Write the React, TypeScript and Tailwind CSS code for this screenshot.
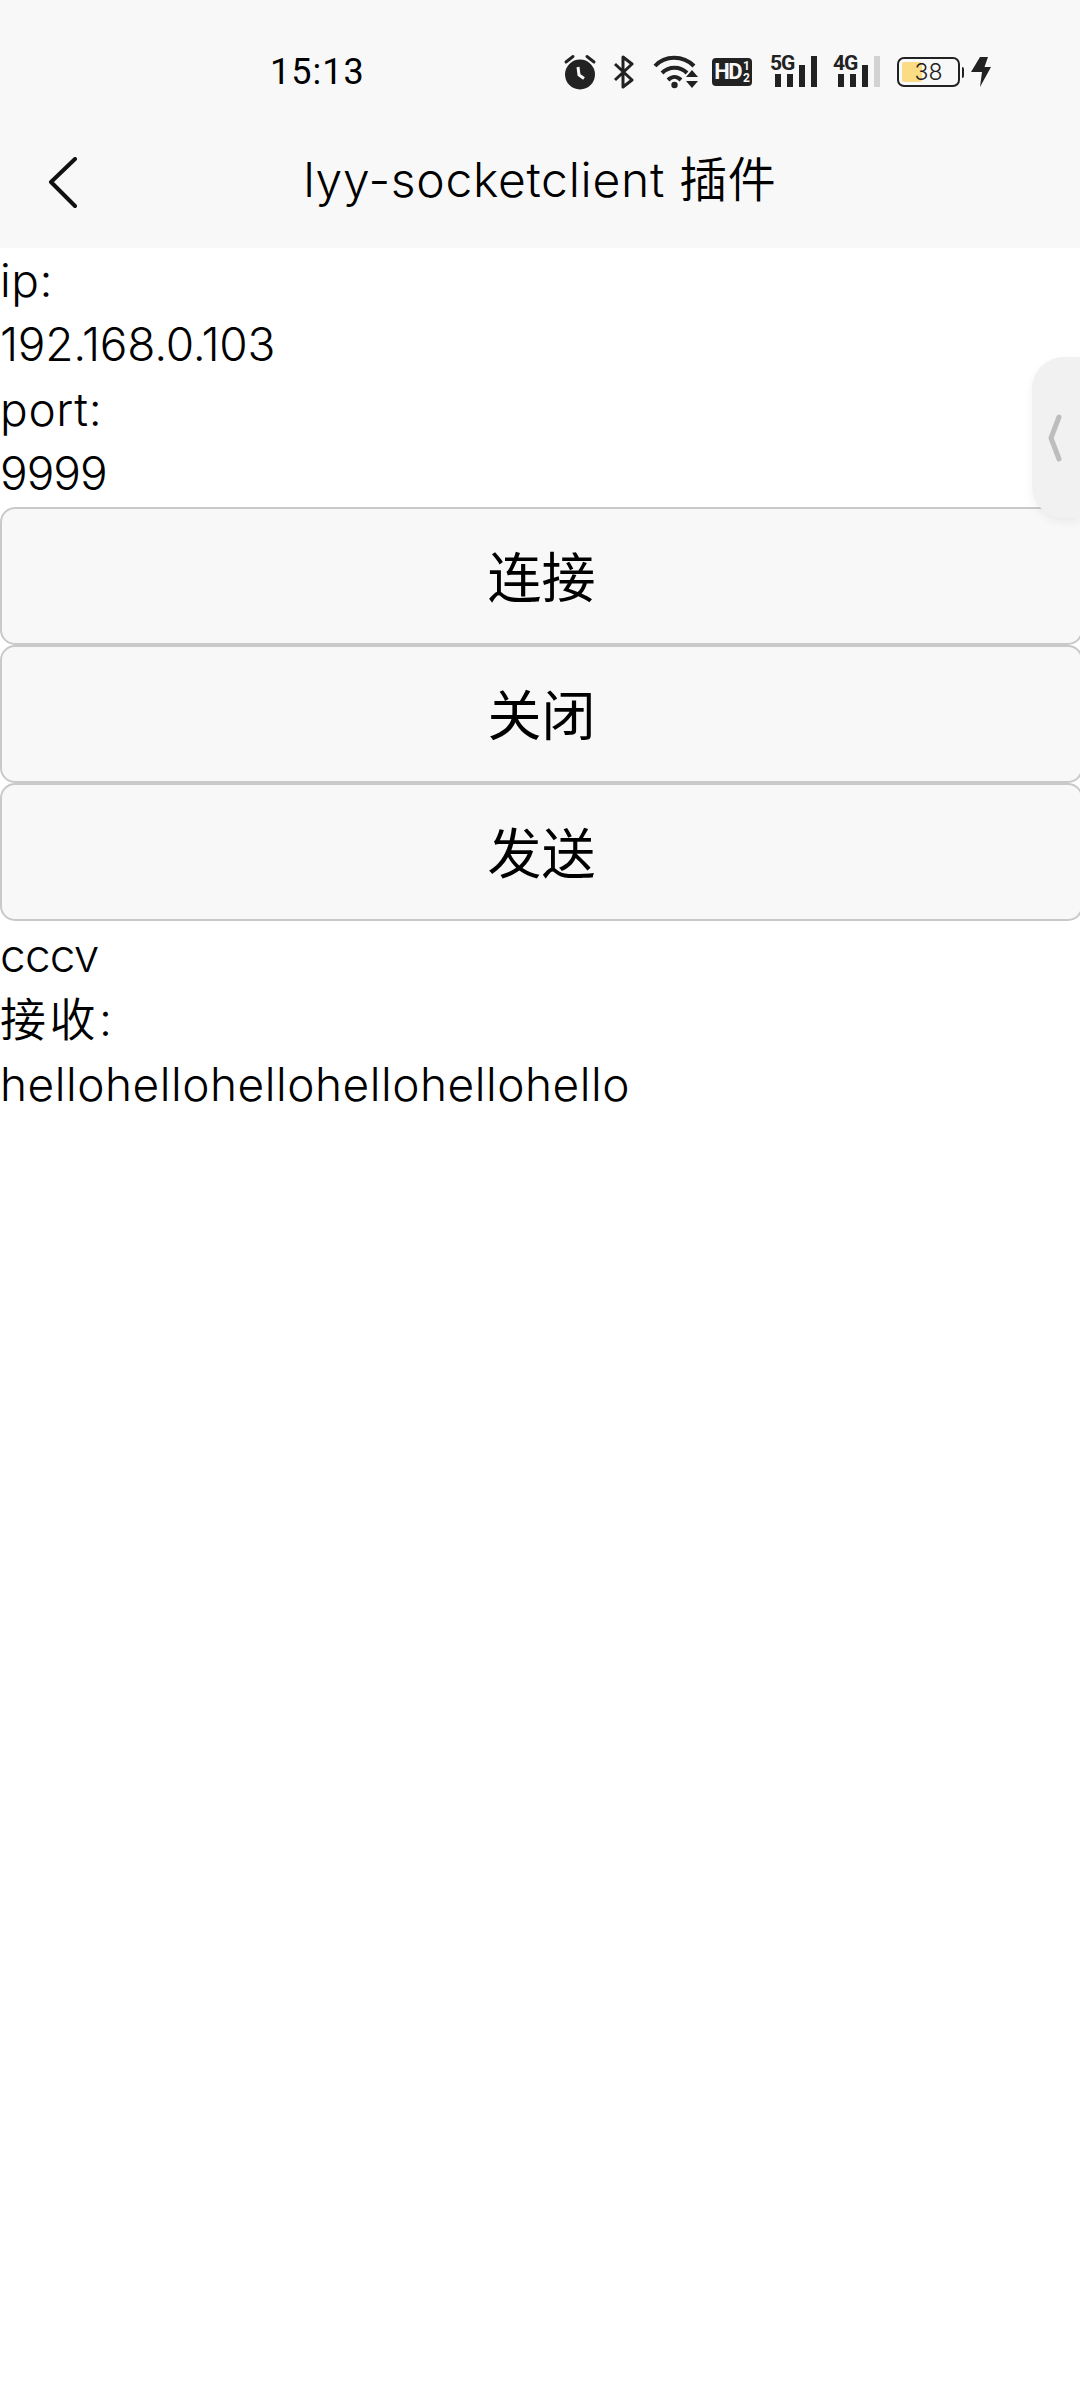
import React from "react";

const textFont = "font-['Inter','Noto_Sans_CJK_SC',sans-serif]";

function AlarmIcon() {
  return (
    <svg width="34" height="36" viewBox="0 0 34 36" className="shrink-0">
      <circle cx="17" cy="20.5" r="15" fill="#222" />
      <path d="M3 8 L10 2.5 M31 8 L24 2.5" stroke="#222" strokeWidth="3" strokeLinecap="round" />
      <path d="M15 13 L16 21 L21 24.5" stroke="#f8f8f8" strokeWidth="3" fill="none" />
    </svg>
  );
}

function BluetoothIcon() {
  return (
    <svg width="22" height="34" viewBox="0 0 22 34" className="shrink-0">
      <path d="M2 9 L19 25 L10 32 L10 2 L19 9 L2 25" stroke="#222" strokeWidth="3" fill="none" strokeLinejoin="round" />
    </svg>
  );
}

function WifiIcon() {
  return (
    <svg width="46" height="34" viewBox="0 0 46 34" className="shrink-0">
      <path d="M2 11 C12 0 30 0 41 11" stroke="#222" strokeWidth="4" fill="none" />
      <path d="M9 18 C16 11 27 11 34 18" stroke="#222" strokeWidth="4" fill="none" />
      <path d="M15 25 C19 21 24 21 28 25" stroke="#222" strokeWidth="4" fill="none" />
      <circle cx="21.5" cy="30" r="3.2" fill="#222" />
      <path d="M33 22 L45 22 L39 15 Z M33 26 L45 26 L39 33 Z" fill="#222" />
    </svg>
  );
}

function HdBadge() {
  return (
    <div className="flex items-center justify-center w-[40px] h-[28px] rounded-[4px] bg-[#222] text-[#f8f8f8] font-['Roboto',sans-serif] font-bold shrink-0">
      <span className="text-[22px] leading-none tracking-[-1.5px]">HD</span>
      <div className="flex flex-col items-center text-[12px] leading-[12px] ml-[2px]">
        <span>1</span>
        <span>2</span>
      </div>
    </div>
  );
}

function SignalIcon({ label, dimLast }: { label: string; dimLast?: boolean }) {
  return (
    <div className="relative w-[47px] h-[32px] shrink-0">
      <span className="absolute left-0 top-[-3px] text-[21px] leading-[20px] font-bold tracking-[-1px] text-[#222] font-['Roboto',sans-serif]">{label}</span>
      <svg width="47" height="32" viewBox="0 0 47 32" className="absolute inset-0">
        <rect x="5" y="18" width="6" height="13" fill="#222" />
        <rect x="17" y="18" width="6" height="13" fill="#222" />
        <rect x="29" y="9" width="6" height="22" fill="#222" />
        <rect x="41" y="0" width="6" height="31" fill={dimLast ? "#d2d2d2" : "#222"} />
      </svg>
    </div>
  );
}

function BatteryIcon() {
  return (
    <div className="flex items-center shrink-0">
      <div className="relative w-[63px] h-[30px] rounded-[7px] border-[2px] border-[#222] overflow-hidden">
        <div className="absolute left-[3px] top-[3px] bottom-[3px] w-[20px] rounded-[2px] bg-[#fbdc85]" />
        <span className="absolute inset-0 flex items-center justify-center text-[23px] leading-none font-light text-[#222] font-['Inter',sans-serif]">38</span>
      </div>
      <div className="w-[2px] h-[11px] ml-[2px] bg-[#222] rounded-r-[2px]" />
    </div>
  );
}

function BoltIcon() {
  return (
    <svg width="20" height="30" viewBox="0 0 20 30" className="shrink-0">
      <path d="M9 0 L17 0 L13.5 10 L20 10 L9 30 L11 15 L0 15 Z" fill="#222" />
    </svg>
  );
}

function StatusBar() {
  return (
    <div className="flex items-center h-[112px] pt-[32px] pl-[270px]">
      <span className="w-[293px] text-[36px] leading-none font-normal text-black font-['Roboto',sans-serif] tracking-[1px]">15:13</span>
      <div className="flex items-center">
        <AlarmIcon />
        <div className="ml-[16px]"><BluetoothIcon /></div>
        <div className="ml-[18px]"><WifiIcon /></div>
        <div className="ml-[13px]"><HdBadge /></div>
        <div className="ml-[18px]"><SignalIcon label="5G" /></div>
        <div className="ml-[16px]"><SignalIcon label="4G" dimLast /></div>
        <div className="ml-[17px]"><BatteryIcon /></div>
        <div className="ml-[7px]"><BoltIcon /></div>
      </div>
    </div>
  );
}

function NavBar() {
  return (
    <div className="relative flex items-center justify-center h-[136px]">
      <svg width="30" height="52" viewBox="0 0 30 52" className="absolute left-[48px] top-[45px]">
        <path d="M27 2 L3 25 L27 49" stroke="#111" strokeWidth="4" strokeLinecap="round" strokeLinejoin="round" fill="none" />
      </svg>
      <span className={`text-[48px] leading-none font-[350] tracking-[0.7px] text-black ${textFont}`}>lyy-socketclient 插件</span>
    </div>
  );
}

function ActionButton({ label }: { label: string }) {
  return (
    <button className="block w-[1083px] h-[138px] pt-[6px] rounded-[15px] border-2 border-[#c9c9c9] bg-[#f8f8f8] text-[54px] leading-none font-normal text-black">
      {label}
    </button>
  );
}

export default function App() {
  return (
    <div className={`relative w-[1080px] h-[2400px] bg-white overflow-hidden text-black font-[350] ${textFont}`}>
      <div className="bg-[#f8f8f8]">
        <StatusBar />
        <NavBar />
      </div>

      <div className="text-[46px] leading-[64.3px]">
        <div className="tracking-[0.5px]">ip:</div>
        <div className="tracking-[-0.25px]">192.168.0.103</div>
        <div className="tracking-[0.7px]">port:</div>
        <div className="tracking-[-1px]">9999</div>
      </div>
      <div className="mt-[2px]">
        <ActionButton label="连接" />
        <ActionButton label="关闭" />
        <ActionButton label="发送" />
      </div>
      <div className="text-[46px] leading-[64.3px] mt-[2px]">
        <div className="tracking-[-0.8px]">cccv</div>
        <div className="tracking-[3.5px]">接收:</div>
        <div className="tracking-[0.5px]">hellohellohellohellohellohello</div>
      </div>

      {/* floating side handle */}
      <div className="absolute right-0 top-[357px] flex items-center w-[48px] h-[161px] rounded-l-[32px] bg-[#f1f1f1] shadow-[0_4px_10px_rgba(0,0,0,0.06)] pl-[16px]">
        <svg width="14" height="48" viewBox="0 0 14 48">
          <path d="M11 3 L3 24 L11 45" stroke="#bdbdbd" strokeWidth="5" strokeLinecap="round" strokeLinejoin="round" fill="none" />
        </svg>
      </div>
    </div>
  );
}
